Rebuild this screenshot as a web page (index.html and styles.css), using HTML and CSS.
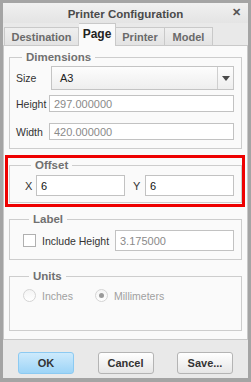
FILE: index.html
```html
<!DOCTYPE html>
<html lang="en">
<head>
    <meta charset="UTF-8">
    <meta name="viewport" content="width=device-width, initial-scale=1.0">
    <title>Printer Configuration</title>
    <link rel="stylesheet" href="styles.css">
</head>
<body>
    <div class="window">
        <div class="titlebar">
            <span class="title">Printer Configuration</span>
            <span class="close">&#x2715;</span>
        </div>

        <div class="tabs">
            <div class="tab tab-dest">Destination</div>
            <div class="tab tab-page active">Page</div>
            <div class="tab tab-printer">Printer</div>
            <div class="tab tab-model">Model</div>
        </div>

        <div class="panel">
            <fieldset class="group dims">
                <legend>Dimensions</legend>
                <div class="form-grid">
                    <label>Size</label>
                    <div class="select">
                        <span class="select-value">A3</span>
                        <span class="select-arrow"></span>
                    </div>
                    <label>Height</label>
                    <div class="field small disabled">297.000000</div>
                    <label class="spaced">Width</label>
                    <div class="field small disabled spaced">420.000000</div>
                </div>
            </fieldset>

            <div class="highlight">
                <fieldset class="group offset">
                    <legend>Offset</legend>
                    <div class="offset-row">
                        <label>X</label>
                        <div class="field">6</div>
                        <label class="y-label">Y</label>
                        <div class="field">6</div>
                    </div>
                </fieldset>
            </div>

            <fieldset class="group label-group">
                <legend>Label</legend>
                <div class="check-row">
                    <span class="checkbox"></span>
                    <label>Include Height</label>
                    <div class="field disabled">3.175000</div>
                </div>
            </fieldset>

            <fieldset class="group units">
                <legend>Units</legend>
                <div class="radio-row">
                    <span class="radio"></span>
                    <label>Inches</label>
                    <span class="radio checked"></span>
                    <label>Millimeters</label>
                </div>
            </fieldset>
        </div>

        <div class="buttons">
            <button class="btn btn-ok">OK</button>
            <button class="btn">Cancel</button>
            <button class="btn">Save...</button>
        </div>
    </div>
</body>
</html>
```

FILE: styles.css
```css
* {
    box-sizing: border-box;
}

body {
    margin: 0;
    font-family: "Liberation Sans", Arial, sans-serif;
    background: #a7a7a7;
}

.window {
    width: 251px;
    height: 382px;
    border: 3px solid #a4a4a4;
    border-bottom-width: 4px;
    background: #e9e9e9;
    display: flex;
    flex-direction: column;
}

.titlebar {
    height: 20px;
    display: flex;
    align-items: center;
    justify-content: center;
    background: linear-gradient(#f0f0f0, #e4e4e4);
    position: relative;
}

.title {
    font-size: 11.5px;
    font-weight: bold;
    color: #4a4a4a;
    padding-top: 1px;
}

.close {
    position: absolute;
    right: 7px;
    top: 3px;
    font-size: 11px;
    font-weight: bold;
    color: #555;
}

.tabs {
    height: 22px;
    display: flex;
    align-items: flex-end;
    padding-left: 1px;
}

.tab {
    height: 18px;
    border: 1px solid #c9c9c9;
    border-bottom: none;
    border-left: none;
    background: linear-gradient(#efefef, #e3e3e3);
    font-size: 11px;
    font-weight: bold;
    color: #6a6a6a;
    display: flex;
    align-items: center;
    justify-content: center;
}

.tab-dest { width: 75px; border-left: 1px solid #c9c9c9; }
.tab-page { width: 37px; }
.tab-printer { width: 49px; }
.tab-model { width: 48px; }

.tab.active {
    height: 23px;
    margin-bottom: -1px;
    background: #fafafa;
    color: #222;
    font-size: 12px;
    padding-bottom: 2px;
    position: relative;
}

.panel {
    height: 295px;
    background: #fafafa;
    border: 1px solid #c9c9c9;
    padding: 4px 5px 0 5px;
}

.group {
    margin: 0;
    border: 1px solid #cdcdcd;
    padding: 2px 7px 8px 6px;
}

.group legend {
    margin-left: 6px;
    padding: 0 4px;
    font-size: 11.5px;
    font-weight: bold;
    color: #707070;
    line-height: 14px;
}

label {
    font-size: 10.5px;
    color: #333;
}

.form-grid {
    display: grid;
    grid-template-columns: 33px 1fr;
    row-gap: 5px;
    align-items: center;
}

.form-grid .spaced {
    margin-top: 6px;
}

.select {
    height: 24px;
    margin-left: 2px;
    border: 1px solid #c4c4c4;
    background: linear-gradient(#fdfdfd, #eeeeee);
    display: flex;
    align-items: center;
}

.select-value {
    flex: 1;
    padding-left: 8px;
    font-size: 11px;
    color: #222;
}

.select-arrow {
    width: 16px;
    height: 22px;
    border-left: 1px solid #cfcfcf;
    display: flex;
    align-items: center;
    justify-content: center;
}

.select-arrow::after {
    content: "";
    border-left: 4px solid transparent;
    border-right: 4px solid transparent;
    border-top: 5px solid #4a4a4a;
}

.field {
    height: 21px;
    border: 1px solid #c2c2c2;
    background: #fff;
    font-size: 11px;
    color: #111;
    padding-left: 4px;
    display: flex;
    align-items: center;
}

.field.small {
    height: 17px;
}

.field.disabled {
    color: #8a8a8a;
}

.highlight {
    margin: 6px -3px 0 -4px;
    border: 3px solid #ee0000;
    padding: 0 0 1px 1px;
}

.offset {
    padding: 3px 7px 6px 15px;
}

.offset-row {
    display: flex;
    align-items: center;
}

.offset-row label {
    font-size: 11px;
    width: 11px;
}

.offset-row .field {
    width: 89px;
}

.offset-row .y-label {
    margin-left: 8px;
    width: 12px;
}

.label-group {
    margin-top: 5px;
    padding: 4px 7px 8px 13px;
}

.check-row {
    display: flex;
    align-items: center;
}

.checkbox {
    width: 13px;
    height: 13px;
    border: 1px solid #b0b0b0;
    background: #fff;
    margin-right: 6px;
}

.check-row label {
    width: 73px;
}

.check-row .field {
    flex: 1;
}

.units {
    margin-top: 9px;
    padding: 2px 7px 24px 13px;
}

.radio-row {
    height: 21px;
    display: flex;
    align-items: center;
}

.radio {
    width: 13px;
    height: 13px;
    border-radius: 50%;
    border: 1px solid #d4d4d4;
    background: linear-gradient(#f4f4f4, #ffffff);
    margin-right: 6px;
    display: flex;
    align-items: center;
    justify-content: center;
}

.radio.checked::after {
    content: "";
    width: 5px;
    height: 5px;
    border-radius: 50%;
    background: #9a9a9a;
}

.radio-row label {
    color: #a0a0a0;
    width: 53px;
}

.buttons {
    flex: 1;
    display: flex;
    justify-content: space-between;
    align-items: flex-start;
    padding: 12px 15px 0 15px;
}

.btn {
    width: 56px;
    height: 22px;
    border: 1px solid #b4b4b4;
    border-radius: 3px;
    background: linear-gradient(#ffffff, #e6e6e6);
    font-family: "Liberation Sans", Arial, sans-serif;
    font-size: 11px;
    font-weight: bold;
    color: #333;
    padding: 0;
}

.btn-ok {
    border-color: #8ccaf2;
    background: linear-gradient(#cdeafc, #9dd4f7);
}
```
